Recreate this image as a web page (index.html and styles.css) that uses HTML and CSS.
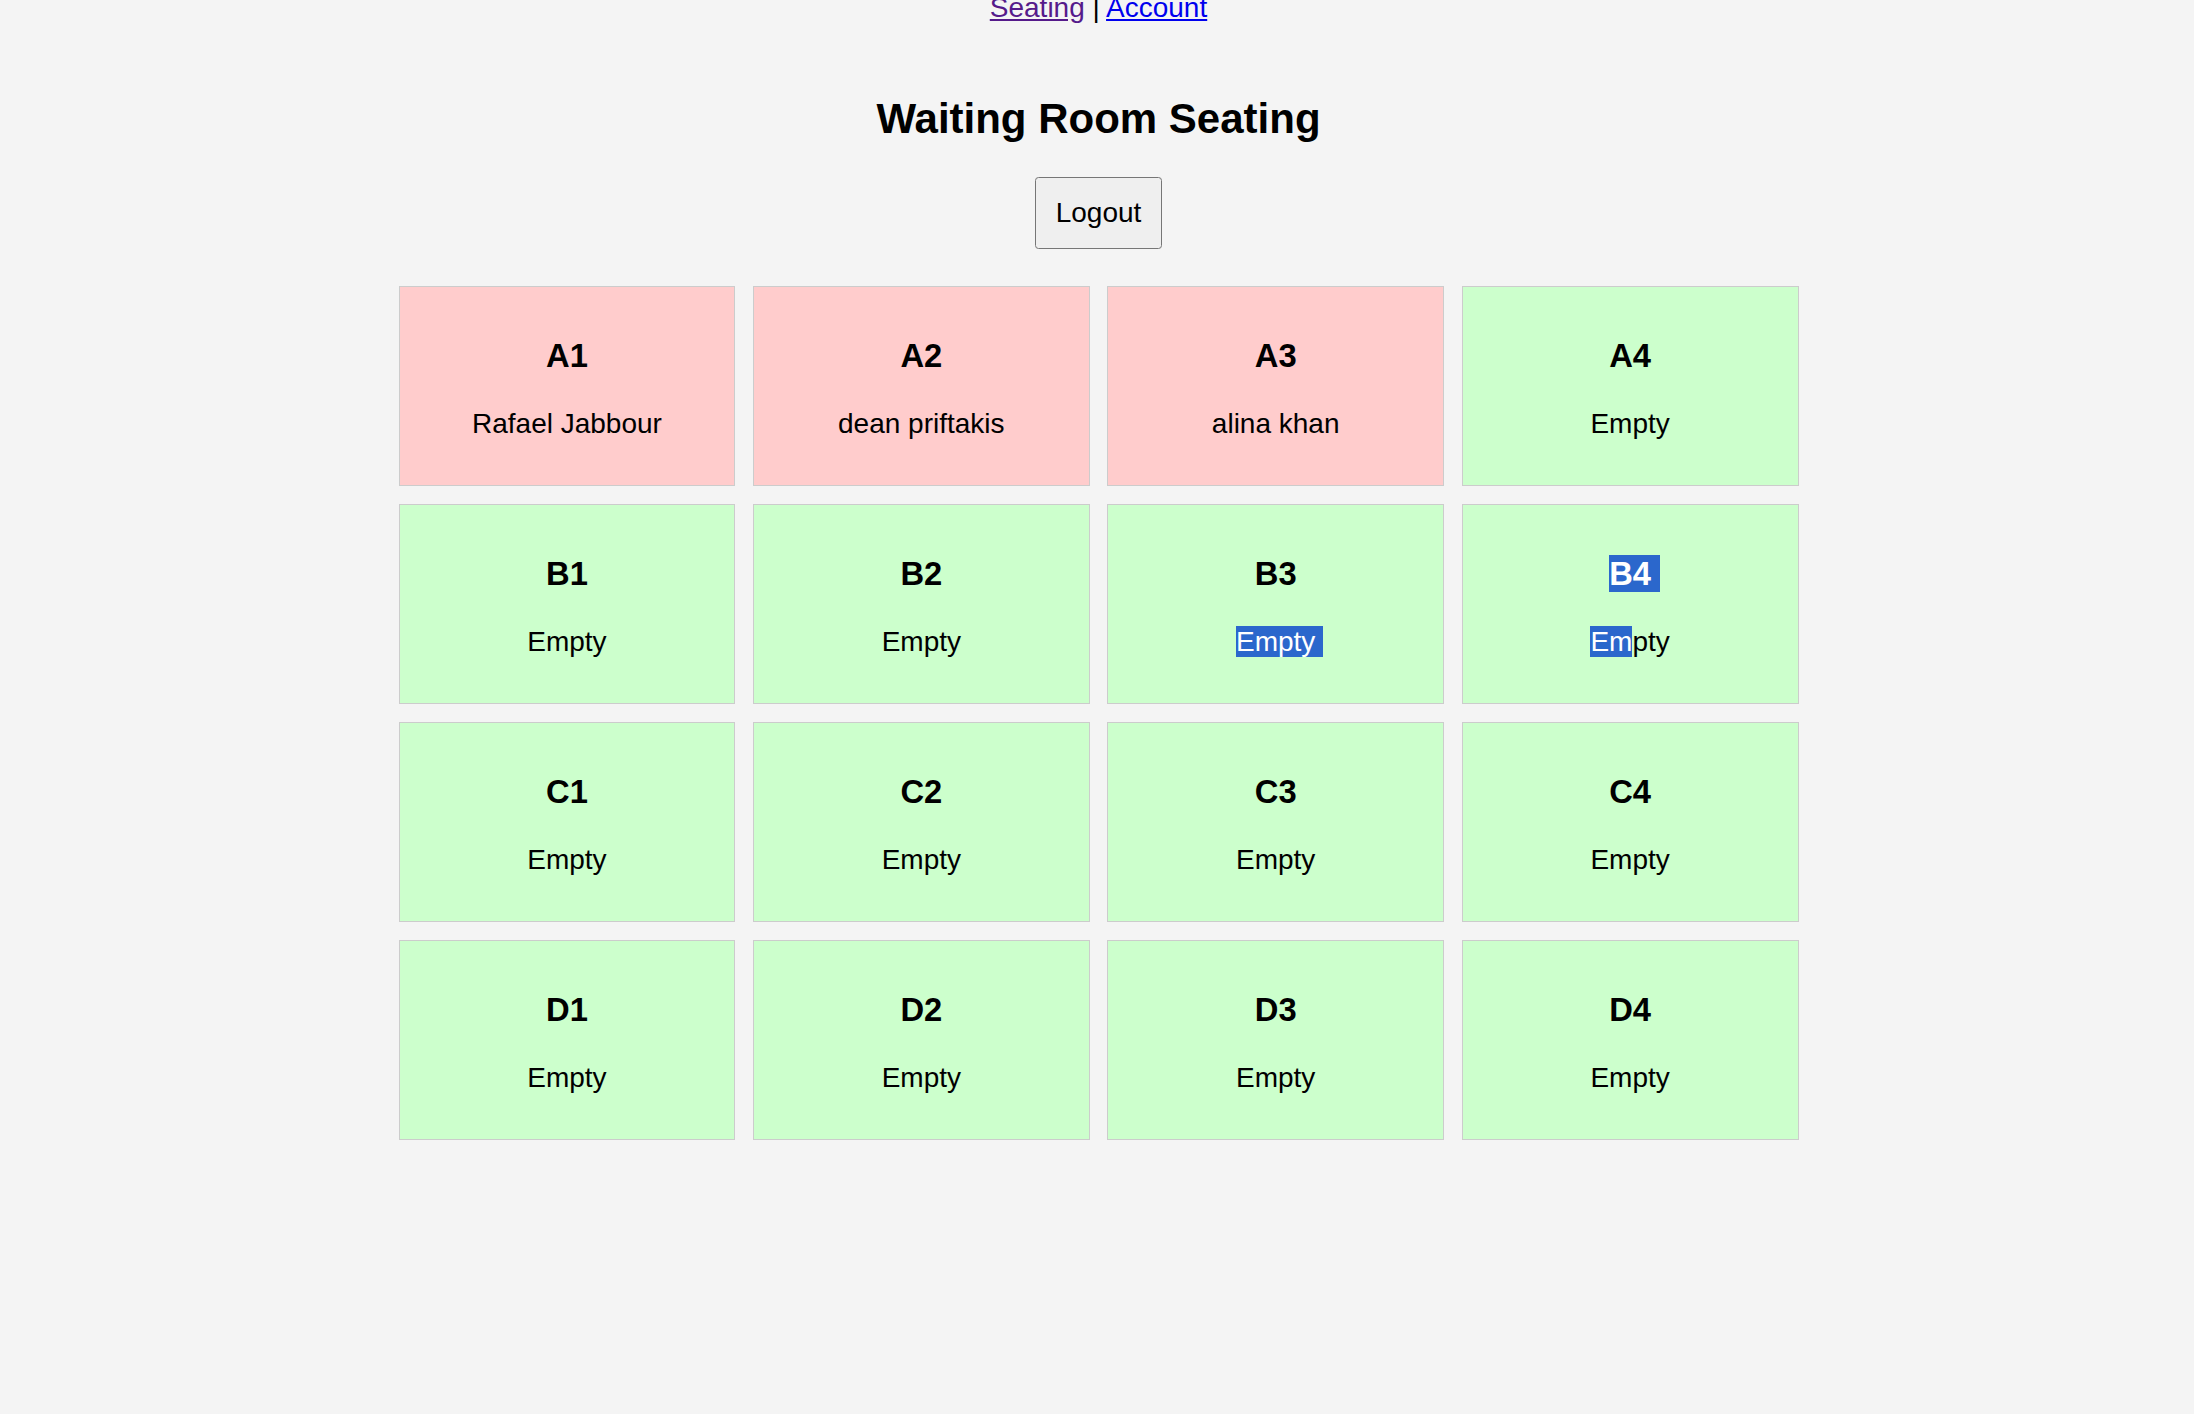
FILE: index.html
```html
<!DOCTYPE html>
<html lang="en">
<head>
<meta charset="utf-8">
<title>Waiting Room Seating</title>
<link rel="stylesheet" href="styles.css">
</head>
<body>
<nav class="topnav"><a class="visited" href="#seating">Seating</a> | <a href="#account">Account</a></nav>
<h2 class="title">Waiting Room Seating</h2>
<div class="actions"><button class="logout" type="button">Logout</button></div>
<div class="grid">
  <div class="seat taken"><h3>A1</h3><p>Rafael Jabbour</p></div>
  <div class="seat taken"><h3>A2</h3><p>dean priftakis</p></div>
  <div class="seat taken"><h3>A3</h3><p>alina khan</p></div>
  <div class="seat free"><h3>A4</h3><p>Empty</p></div>
  <div class="seat free"><h3>B1</h3><p>Empty</p></div>
  <div class="seat free"><h3>B2</h3><p>Empty</p></div>
  <div class="seat free"><h3>B3</h3><p><span class="sel sel-space">Empty</span></p></div>
  <div class="seat free"><h3><span class="sel sel-nl">B4</span></h3><p><span class="sel">Em</span>pty</p></div>
  <div class="seat free"><h3>C1</h3><p>Empty</p></div>
  <div class="seat free"><h3>C2</h3><p>Empty</p></div>
  <div class="seat free"><h3>C3</h3><p>Empty</p></div>
  <div class="seat free"><h3>C4</h3><p>Empty</p></div>
  <div class="seat free"><h3>D1</h3><p>Empty</p></div>
  <div class="seat free"><h3>D2</h3><p>Empty</p></div>
  <div class="seat free"><h3>D3</h3><p>Empty</p></div>
  <div class="seat free"><h3>D4</h3><p>Empty</p></div>
</div>
</body>
</html>
```
FILE: styles.css
```css
html, body {
  background: #f4f4f4;
}
body {
  margin: 0;
  padding: 0 0 0 3px;
  font-family: "Liberation Sans", Arial, sans-serif;
  font-size: 28px;
  color: #000;
}
.topnav {
  margin-top: -8.3px;
  text-align: center;
}
.topnav a {
  color: #0000ee;
  text-decoration: underline;
}
.topnav a.visited {
  color: #551a8b;
}
.title {
  font-size: 42px;
  font-weight: bold;
  text-align: center;
  margin: 70.8px 0 34.3px;
}
.actions {
  display: flex;
  justify-content: center;
  margin-bottom: 37.2px;
}
.logout {
  font-family: "Liberation Sans", Arial, sans-serif;
  font-size: 28px;
  color: #000;
  background: #efefef;
  border: 1px solid #767676;
  border-radius: 3.5px;
  padding: 18.9px 20px;
  line-height: normal;
}
.grid {
  max-width: 1400px;
  margin: 0 auto;
  display: grid;
  grid-template-columns: repeat(4, 1fr);
  gap: 17.5px;
}
.seat {
  border: 1px solid #cccccc;
  padding: 17.5px;
  text-align: center;
}
.seat.taken {
  background: #ffcccc;
}
.seat.free {
  background: #ccffcc;
}
.seat h3 {
  font-size: 32.76px;
  font-weight: bold;
  margin: 32.76px 0;
}
.seat p {
  margin: 28px 0;
}
.sel {
  background: #2b67cc;
  color: #ffffff;
}
.sel-space {
  padding-right: 7.8px;
  margin-right: -7.8px;
}
.sel-nl {
  padding-right: 9.1px;
  margin-right: -9.1px;
}
```
